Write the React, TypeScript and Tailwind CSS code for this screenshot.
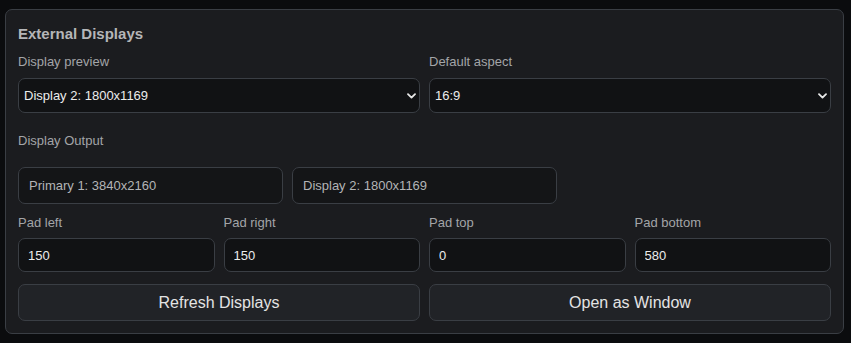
import React from 'react';

const FONT = "font-['Liberation_Sans','Arial',sans-serif]";

const PADS = [
  { label: 'Pad left', value: '150' },
  { label: 'Pad right', value: '150' },
  { label: 'Pad top', value: '0' },
  { label: 'Pad bottom', value: '580' },
];

function Chevron() {
  return (
    <svg width="9" height="6" viewBox="0 0 9 6" className="pointer-events-none absolute right-[4px] top-[15px]">
      <path d="M1 1.2 L4.5 4.6 L8 1.2" fill="none" stroke="#e8e8e8" strokeWidth="1.8" strokeLinecap="round" strokeLinejoin="round" />
    </svg>
  );
}

function SelectField({ label, value }: { label: string; value: string }) {
  return (
    <div className="flex flex-col">
      <div className="text-[13px] leading-4 text-[#a3a5a8]">{label}</div>
      <div className="relative mt-2 h-[35px]">
        <select
          defaultValue={value}
          className="h-full w-full appearance-none rounded-[7px] border border-[#3a3e44] bg-[#111214] pl-[5px] text-[13px] text-[#ececec] outline-none"
        >
          <option>{value}</option>
        </select>
        <Chevron />
      </div>
    </div>
  );
}

export default function App() {
  return (
    <div className={`min-h-[343px] bg-[#0b0c0e] pt-[9px] pl-[5px] ${FONT}`}>
      <div className="w-[839px] rounded-[7px] border border-[#3a3e44] bg-[#1b1c1f] p-3">
        <h2 className="h-6 text-[15px] font-bold leading-6 text-[#b5b6b8]">External Displays</h2>

        <div className="mt-2 grid grid-cols-2 gap-x-[9px]">
          <SelectField label="Display preview" value="Display 2: 1800x1169" />
          <SelectField label="Default aspect" value="16:9" />
        </div>

        <div className="mt-5 text-[13px] leading-4 text-[#a3a5a8]">Display Output</div>
        <div className="mt-[18px] grid grid-cols-3 gap-x-[9px]">
          {['Primary 1: 3840x2160', 'Display 2: 1800x1169'].map((d) => (
            <div
              key={d}
              className="flex h-[37px] items-center rounded-[7px] border border-[#3a3e44] bg-[#141517] px-[10px] text-[13px] text-[#b3b4b6]"
            >
              {d}
            </div>
          ))}
        </div>

        <div className="mt-[11px] grid grid-cols-4 gap-x-[9px]">
          {PADS.map((p) => (
            <div key={p.label} className="flex flex-col">
              <div className="text-[13px] leading-4 text-[#a3a5a8]">{p.label}</div>
              <input
                defaultValue={p.value}
                className="mt-[7px] h-[34px] w-full rounded-[7px] border border-[#3a3e44] bg-[#111214] px-[9px] text-[13px] text-[#ececec] outline-none"
              />
            </div>
          ))}
        </div>

        <div className="mt-3 grid grid-cols-2 gap-x-[9px]">
          {['Refresh Displays', 'Open as Window'].map((b) => (
            <button
              key={b}
              className="h-[37px] rounded-[7px] border border-[#3a3e44] bg-[#212327] text-[16px] text-[#e4e4e4]"
            >
              {b}
            </button>
          ))}
        </div>
      </div>
    </div>
  );
}
